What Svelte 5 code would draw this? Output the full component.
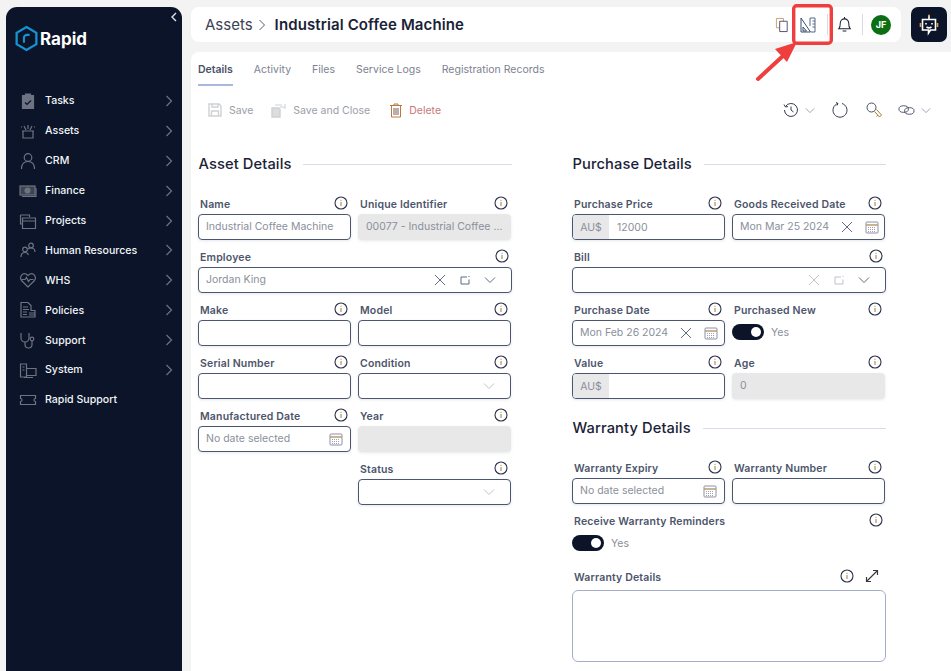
<script>
  const menu = [
    { label: 'Tasks', icon: 'tasks' },
    { label: 'Assets', icon: 'assets' },
    { label: 'CRM', icon: 'crm' },
    { label: 'Finance', icon: 'finance' },
    { label: 'Projects', icon: 'projects' },
    { label: 'Human Resources', icon: 'hr' },
    { label: 'WHS', icon: 'whs' },
    { label: 'Policies', icon: 'policies' },
    { label: 'Support', icon: 'support' },
    { label: 'System', icon: 'system' },
    { label: 'Rapid Support', icon: 'ticket', noArrow: true }
  ];
  const tabs = ['Details', 'Activity', 'Files', 'Service Logs', 'Registration Records'];
</script>

{#snippet info()}
  <svg class="info" viewBox="0 0 14 14" width="14" height="14"><circle cx="7" cy="7" r="6" fill="none" stroke="#2a3248" stroke-width="1.100"/><path d="M7 6v4M7 3.800v1" stroke="#a5793f" stroke-width="1" fill="none"/></svg>
{/snippet}

{#snippet cross(faint)}
  <svg class="ic" class:faint viewBox="0 0 12 12" width="12" height="12"><path d="M1 1l10 10M11 1L1 11" stroke="#5f6b80" stroke-width="1" fill="none"/></svg>
{/snippet}

{#snippet popout(faint)}
  <svg class="ic" class:faint viewBox="0 0 12 12" width="12" height="12"><path d="M8 3H2v7h8V5.500M10 2v1" stroke="#5f6b80" stroke-width="1" fill="none"/></svg>
{/snippet}

{#snippet caret(faint)}
  <svg class="ic" class:faint viewBox="0 0 12 8" width="12" height="8"><path d="M1 1.500l5 5 5-5" stroke="#5f6b80" stroke-width="1" fill="none"/></svg>
{/snippet}

{#snippet calendar()}
  <svg class="ic" viewBox="0 0 14 14" width="14" height="14"><rect x="1" y="2" width="12" height="11" rx="1" fill="none" stroke="#8b8fa6" stroke-width="1"/><path d="M1 5h12" stroke="#b79a78" stroke-width="1.400"/><path d="M3 7.500h8M3 9.500h8M3 11.500h8" stroke="#a3a3ad" stroke-width="1" stroke-dasharray="1 1"/></svg>
{/snippet}

{#snippet label(text)}
  <div class="label"><span>{text}</span>{@render info()}</div>
{/snippet}

<div class="page">
  <aside class="sidebar">
    <svg class="collapse" viewBox="0 0 8 10" width="8" height="10"><path d="M6 1L2 5l4 4" stroke="#dfe3ea" stroke-width="1.400" fill="none"/></svg>
    <div class="logo">
      <svg viewBox="0 0 24 26" width="25" height="27"><path d="M12 2l9.500 5.500v11L12 24l-9.500-5.500v-11z" fill="none" stroke="#1693d2" stroke-width="2.200"/><path d="M9.500 17v-4.500a3 3 0 0 1 3-3H15" fill="none" stroke="#1693d2" stroke-width="2"/></svg>
      <span>Rapid</span>
    </div>
    <nav>
      {#each menu as item}
        <div class="nav-item">
          <svg class="nav-icon" viewBox="0 0 18 18" width="18" height="18" fill="none" stroke="#6d7382" stroke-width="1.200">
            {#if item.icon === 'tasks'}
              <path d="M3.500 3.500h11v13h-11z" fill="#6d7382"/><path d="M6.500 2h5v3h-5z" fill="#6d7382"/><path d="M6 10.500l2 2 4-4" stroke="#0b1428"/>
            {:else if item.icon === 'assets'}
              <path d="M4 9h10v7H4zM3 9h12M7 8L5 4M11 8l2-4M9 7V3M2 5h1M15 5h1" />
            {:else if item.icon === 'crm'}
              <circle cx="9" cy="5.500" r="3.800"/><path d="M2.500 17c0-5 2.500-7.500 6.500-7.500s6.500 2.500 6.500 7.500"/>
            {:else if item.icon === 'finance'}
              <rect x="1" y="4" width="15" height="9" fill="#3d4350"/><circle cx="8.500" cy="8.500" r="2.500" fill="#6d7382"/><path d="M3 14.500h14V6"/>
            {:else if item.icon === 'projects'}
              <path d="M1.500 3h9v2M1.500 3v9h2"/><path d="M3.500 6h13v10.500h-13zM3.500 9h13"/>
            {:else if item.icon === 'hr'}
              <circle cx="12" cy="4.500" r="2.300"/><circle cx="6" cy="8.500" r="2.300"/><path d="M2 16c0-3 1.500-4.500 4-4.500s3 1 3.500 2.500M9 8c1-1 2-1 3-1 2.500 0 4 1.500 4 4"/>
            {:else if item.icon === 'whs'}
              <path d="M9 16L2.500 9.500C0 6 3.500 1.500 7 3l2 1.500L11 3c3.500-1.500 7 3 4.500 6.500z"/><path d="M2.500 8.500H6l1.500-2 2 4 1.500-2h3.500"/>
            {:else if item.icon === 'policies'}
              <path d="M2 1.500h7l3 3v5h4v6.500H2z"/><path d="M4 6h5M4 8.500h6M4 11h4M10 12h6M10 14h6M4 13.500h4"/>
            {:else if item.icon === 'support'}
              <path d="M2 2v5a4 4 0 0 0 8 0V2"/><path d="M6 11v2.500a3.500 3.500 0 0 0 7 0V10"/><circle cx="13" cy="8" r="1.800"/>
            {:else if item.icon === 'system'}
              <path d="M1.500 3h6v13h-6z"/><path d="M7.500 7.500h9.500v7H7.500M5 16.500h9M3.500 6h2M3.500 9h2" />
            {:else}
              <path d="M1.500 4.500h15v3a1.500 1.500 0 0 0 0 3v3h-15v-3a1.500 1.500 0 0 0 0-3z"/>
            {/if}
          </svg>
          <span class="nav-label">{item.label}</span>
          {#if !item.noArrow}
            <svg class="nav-arrow" viewBox="0 0 8 12" width="8" height="12"><path d="M1.500 1l5 5-5 5" stroke="#6d7382" stroke-width="1.200" fill="none"/></svg>
          {/if}
        </div>
      {/each}
    </nav>
  </aside>

  <div class="main">
    <div class="top-row">
      <header class="header">
        <div class="crumbs">
          <span>Assets</span>
          <svg viewBox="0 0 8 12" width="8" height="12"><path d="M1.500 1l5 5-5 5" stroke="#555c6c" stroke-width="1" fill="none"/></svg>
          <strong>Industrial Coffee Machine</strong>
        </div>
        <div class="head-icons">
          <svg viewBox="0 0 16 16" width="15" height="16" fill="none" stroke-width="1"><path d="M9 4V1H1.500v10H5" stroke="#c99a68"/><path d="M5 4h8v11H5z" stroke="#4d4a72"/></svg>
          <svg class="ruler" viewBox="0 0 16 16" width="16" height="16" fill="none" stroke-width="1"><path d="M1 1l9.500 14H1zM3 10l3.500 4H3z" stroke="#3b4c6e"/><path d="M10 1h5v14h-4M10 1v8M12.500 4h2.500M12.500 7h2.500M12.500 10h2.500" stroke="#56688a"/></svg>
          <i class="sep first"></i>
          <svg class="bell" viewBox="0 0 16 18" width="15" height="17" fill="none" stroke="#1a2236" stroke-width="1.100"><path d="M2 13.500c1.500-1.500 1.500-3 1.500-6a4.500 4.500 0 0 1 9 0c0 3 0 4.500 1.500 6z"/><path d="M6 16h4M8 1v2"/></svg>
          <i class="sep"></i>
          <span class="avatar">JF</span>
        </div>
      </header>
      <div class="bot">
        <svg viewBox="0 0 24 24" width="24" height="24" fill="none" stroke="#fff" stroke-width="1.600"><path d="M12 2.500v3.500"/><circle cx="12" cy="2.500" r="1" fill="#e8a24a" stroke="none"/><path d="M5.500 6.500h13v10.500h-5l-2 3v-3h-6z" fill="#0b1428"/><path d="M9 10v1.500M15 10v1.500M9.500 14c1.500 1 3.500 1 5 0"/><path d="M3.500 10v4M20.500 10v4" stroke="#e8a24a"/></svg>
      </div>
    </div>

    <section class="content">
      <div class="tabs">
        {#each tabs as tab, i}
          <span class="tab" class:active={i === 0}>{tab}</span>
        {/each}
      </div>

      <div class="toolbar">
        <div class="actions">
          <button class="action">
            <svg viewBox="0 0 14 14" width="14" height="14" fill="none" stroke="#cfd1d4" stroke-width="1.400"><path d="M1 1h10l2 2v10H1z"/><path d="M4 1v3h6V1M3.500 13V8h7v5"/></svg>
            Save
          </button>
          <button class="action">
            <svg viewBox="0 0 15 15" width="15" height="15" fill="none" stroke="#cfd1d4" stroke-width="1.400"><path d="M1 5h7l1 1v8H1z" fill="#dcdddf"/><path d="M5 3V1M6 2h5M9 4h5M11 1v0M14 1v5" stroke-width="1"/></svg>
            Save and Close
          </button>
          <button class="action danger">
            <svg viewBox="0 0 12 15" width="12" height="15" fill="none" stroke="#b9793f" stroke-width="1"><path d="M0 2.500h12M4 2.500V1h4v1.500M1.500 2.500V14h9V2.500"/><path d="M4 5v7M6 5v7M8 5v7" stroke="#7d5a50"/></svg>
            Delete
          </button>
        </div>
        <div class="tools">
          <svg viewBox="0 0 16 16" width="16" height="16" fill="none" stroke="#333a4c" stroke-width="1"><path d="M2.500 4.500A6.500 6.500 0 1 1 1.500 8M1 2.500l1.500 2.500 2.500-.5M8 4.500V8l2.500 2"/></svg>
          <svg class="tool-caret" viewBox="0 0 12 8" width="10" height="7"><path d="M1 1.500l5 5 5-5" stroke="#8a91a3" stroke-width="1" fill="none"/></svg>
          <svg class="tool-gap" viewBox="0 0 16 16" width="16" height="16" fill="none" stroke="#333a4c" stroke-width="1"><path d="M6 1.500A7 7 0 1 0 10 1.500M6 1.500L4 .5M6 1.500L5 3.500"/></svg>
          <svg class="tool-gap2" viewBox="0 0 16 16" width="16" height="16" fill="none" stroke="#46506a" stroke-width="1"><circle cx="5.500" cy="5.500" r="4.500"/><path d="M8.500 9.500l5 5.500 2-2-5-5.500M12 13l-1.500 1.500" stroke="#a5793f"/></svg>
          <svg class="tool-gap3" viewBox="0 0 18 12" width="17" height="12" fill="none" stroke="#46506a" stroke-width="1"><ellipse cx="6" cy="5" rx="5" ry="3.500"/><ellipse cx="12" cy="7" rx="5" ry="3.500"/></svg>
          <svg class="tool-caret last" viewBox="0 0 12 8" width="10" height="7"><path d="M1 1.500l5 5 5-5" stroke="#8a91a3" stroke-width="1" fill="none"/></svg>
        </div>
      </div>

      <div class="columns">
        <div class="col">
          <h2 class="heading"><span>Asset Details</span></h2>
          <div class="grid">
            <div class="field">{@render label('Name')}<div class="input">Industrial Coffee Machine</div></div>
            <div class="field">{@render label('Unique Identifier')}<div class="input disabled">00077 - Industrial Coffee ...</div></div>
            <div class="field wide">
              {@render label('Employee')}
              <div class="input"><span class="grow">Jordan King</span><span class="lookup">{@render cross()}{@render popout()}{@render caret()}</span></div>
            </div>
            <div class="field">{@render label('Make')}<div class="input"></div></div>
            <div class="field">{@render label('Model')}<div class="input"></div></div>
            <div class="field">{@render label('Serial Number')}<div class="input"></div></div>
            <div class="field">{@render label('Condition')}<div class="input"><span class="grow"></span><span class="lookup">{@render caret(true)}</span></div></div>
            <div class="field">{@render label('Manufactured Date')}<div class="input"><span class="grow">No date selected</span>{@render calendar()}</div></div>
            <div class="field">{@render label('Year')}<div class="input disabled"></div></div>
            <div class="field second">{@render label('Status')}<div class="input"><span class="grow"></span><span class="lookup">{@render caret(true)}</span></div></div>
          </div>
        </div>

        <div class="col">
          <h2 class="heading"><span>Purchase Details</span></h2>
          <div class="grid">
            <div class="field">{@render label('Purchase Price')}<div class="input money"><span class="prefix">AU$</span><span>12000</span></div></div>
            <div class="field">{@render label('Goods Received Date')}<div class="input date"><span class="grow">Mon Mar 25 2024</span>{@render cross()}{@render calendar()}</div></div>
            <div class="field wide">
              {@render label('Bill')}
              <div class="input"><span class="grow"></span><span class="lookup">{@render cross(true)}{@render popout(true)}{@render caret()}</span></div>
            </div>
            <div class="field">{@render label('Purchase Date')}<div class="input date"><span class="grow">Mon Feb 26 2024</span>{@render cross()}{@render calendar()}</div></div>
            <div class="field">{@render label('Purchased New')}<div class="toggle-row"><span class="toggle"></span>Yes</div></div>
            <div class="field">{@render label('Value')}<div class="input money"><span class="prefix">AU$</span></div></div>
            <div class="field">{@render label('Age')}<div class="input disabled">0</div></div>
          </div>

          <h2 class="heading warranty"><span>Warranty Details</span></h2>
          <div class="grid">
            <div class="field">{@render label('Warranty Expiry')}<div class="input"><span class="grow">No date selected</span>{@render calendar()}</div></div>
            <div class="field">{@render label('Warranty Number')}<div class="input"></div></div>
            <div class="field wide">{@render label('Receive Warranty Reminders')}<div class="toggle-row"><span class="toggle"></span>Yes</div></div>
            <div class="field wide notes">
              <div class="label">
                <span>Warranty Details</span>
                {@render info()}
                <svg class="expand" viewBox="0 0 14 14" width="14" height="14" fill="none" stroke="#3a3a3a" stroke-width="1.200"><path d="M1.500 12.500l11-11M8 1.500h4.500V6M1.500 8v4.500H6"/></svg>
              </div>
              <div class="textarea"></div>
            </div>
          </div>
        </div>
      </div>
    </section>
  </div>

  <!-- annotation drawn over the screenshot -->
  <svg class="callout" viewBox="0 0 951 100" width="951" height="100">
    <rect x="793.700" y="5.700" width="37.600" height="37.600" rx="3" fill="none" stroke="#ee3e3e" stroke-width="3.400"/>
    <path d="M758 79l26-24" stroke="#ee3e3e" stroke-width="4" stroke-linecap="round" fill="none"/>
    <path d="M797 42l-22 7 12 13z" fill="#ee3e3e"/>
  </svg>
</div>

<style>
  :global(body) {
    background: #f3f3f3;
    overflow: hidden;
  }
  .page {
    position: relative;
    display: flex;
    gap: 9px;
    height: 664px;
    padding: 7px 0 0 6px;
    overflow: hidden;
    font-family: Inter, "Liberation Sans", sans-serif;
    font-size: 11px;
    color: #1a2236;
  }

  /* --- Sidebar --- */
  .sidebar {
    position: relative;
    flex: 0 0 176px;
    background: #0b1428;
    border-radius: 11px 11px 0 0;
  }
  .collapse {
    position: absolute;
    top: 5px;
    right: 4px;
  }
  .logo {
    display: flex;
    align-items: center;
    gap: 1px;
    padding: 18px 0 0 8px;
    color: #fff;
    font-size: 17px;
    font-weight: 700;
  }
  nav {
    margin-top: 34px;
  }
  .nav-item {
    display: flex;
    align-items: center;
    height: 29.900px;
    padding: 0 9px 0 13px;
    color: #f2f4f8;
    font-size: 10.600px;
    font-weight: 500;
  }
  .nav-icon {
    flex: none;
  }
  .nav-label {
    flex: 1;
    margin-left: 8px;
  }

  /* --- Top bar --- */
  .main {
    flex: 1;
    min-width: 0;
  }
  .top-row {
    display: flex;
    gap: 10px;
    padding-right: 4px;
  }
  .header {
    flex: 1;
    display: flex;
    align-items: center;
    justify-content: space-between;
    height: 35px;
    padding: 0 10px 0 14px;
    background: #fff;
    border-radius: 8px;
  }
  .crumbs {
    display: flex;
    align-items: center;
    gap: 8px;
    font-size: 15px;
    color: #3b4254;
  }
  .crumbs svg {
    margin-left: -3px;
  }
  .crumbs strong {
    margin-left: 1px;
    letter-spacing: 0.120px;
    font-weight: 600;
    color: #1a2236;
  }
  .head-icons {
    display: flex;
    align-items: center;
  }
  .ruler {
    margin-left: 10px;
  }
  .sep {
    width: 1px;
    height: 21px;
    margin: 0 8px 0 10px;
    background: #d9dbe0;
  }
  .sep.first {
    margin: 0 9px 0 11px;
  }
  .avatar {
    display: grid;
    place-items: center;
    width: 20px;
    height: 20px;
    border-radius: 50%;
    background: #0b6e12;
    color: #fff;
    font-size: 9px;
    font-weight: 700;
  }
  .bot {
    display: grid;
    place-items: center;
    flex: 0 0 36px;
    height: 35px;
    background: #0b1428;
    border-radius: 7px;
  }

  /* --- Content card --- */
  .content {
    margin-top: 10px;
    height: 619px;
    padding: 0 0 0 7px;
    background: #fff;
    border-radius: 8px 0 0 0;
  }
  .tabs {
    display: flex;
    gap: 21px;
    height: 35px;
  }
  .tab {
    height: 34px;
    padding-top: 11px;
    box-sizing: border-box;
    font-size: 10.500px;
    color: #7c8291;
  }
  .tab.active {
    color: #4a5266;
    font-weight: 600;
    border-bottom: 2px solid #a9b8dd;
  }
  .toolbar {
    display: flex;
    align-items: center;
    justify-content: space-between;
    height: 46px;
    padding: 0 18px 0 10px;
  }
  .actions {
    display: flex;
    gap: 18px;
  }
  .action {
    display: flex;
    align-items: center;
    gap: 7px;
    padding: 0;
    border: 0;
    background: none;
    font: inherit;
    font-size: 10.500px;
    color: #9a9ea8;
  }
  .action.danger {
    margin-left: 2px;
    color: #c9777a;
  }
  .tools {
    display: flex;
    align-items: center;
  }
  .tools > svg:first-child {
    margin-right: -2px;
  }
  .tool-caret {
    margin-left: 8px;
  }
  .tool-caret.last {
    margin: 0 2px 0 6px;
  }
  .tool-gap {
    margin-left: 17px;
  }
  .tool-gap2 {
    margin-left: 18px;
  }
  .tool-gap3 {
    margin-left: 16px;
  }

  /* --- Form --- */
  .columns {
    display: flex;
    gap: 60px;
    margin-top: 16px;
  }
  .col {
    width: 314px;
  }
  .heading {
    display: flex;
    align-items: center;
    gap: 12px;
    height: 30px;
    margin: 0 0 15px;
    padding-left: 0.500px;
    font-size: 14.700px;
    font-weight: 500;
    letter-spacing: 0.100px;
    color: #1a2236;
  }
  .heading::after {
    content: '';
    flex: 1;
    height: 1px;
    background: #d8dde8;
  }
  .heading.warranty {
    margin-top: 7px;
  }
  .grid {
    display: grid;
    grid-template-columns: 153px 153px;
    column-gap: 7px;
  }
  .field {
    height: 53px;
    min-width: 0;
  }
  .wide {
    grid-column: 1 / 3;
    margin-right: -1px;
  }
  .second {
    grid-column: 2;
  }
  .label {
    display: flex;
    align-items: center;
    gap: 8px;
    height: 20px;
    padding: 0 3px 0 2px;
    font-size: 10.500px;
    font-weight: 600;
    letter-spacing: 0.170px;
    color: #4d556b;
  }
  .label > span {
    flex: 1;
  }
  .info {
    flex: none;
    margin-top: -3px;
  }
  .input {
    display: flex;
    align-items: center;
    gap: 8px;
    box-sizing: border-box;
    height: 26px;
    padding: 0 7px 1px;
    border: 1px solid #4d5670;
    border-radius: 4px;
    box-shadow: 0 1px 3px rgba(60, 70, 100, 0.12);
    font-size: 10.500px;
    color: #8b8f9b;
    white-space: nowrap;
    overflow: hidden;
  }
  .input.date {
    gap: 12px;
  }
  .input.disabled {
    border-color: #e8e8e8;
    background: #e8e8e8;
  }
  .grow {
    flex: 1;
  }
  .lookup {
    display: flex;
    align-items: center;
    gap: 13px;
    padding-right: 8px;
  }
  .ic {
    flex: none;
  }
  .ic.faint {
    opacity: 0.4;
  }
  .input.money {
    padding: 0 7px 0 0;
  }
  .prefix {
    display: grid;
    place-items: center;
    width: 36px;
    height: 100%;
    background: #e8e8e8;
  }
  .toggle-row {
    display: flex;
    align-items: center;
    gap: 7px;
    height: 24px;
    font-size: 10.500px;
    color: #8b8f9b;
  }
  .toggle {
    position: relative;
    width: 32px;
    height: 16px;
    border-radius: 8px;
    background: #0b1428;
  }
  .toggle::after {
    content: '';
    position: absolute;
    top: 3px;
    right: 3px;
    width: 10px;
    height: 10px;
    border-radius: 50%;
    background: #fff;
  }
  .notes {
    height: auto;
    margin-top: 3px;
  }
  .notes .label {
    padding-right: 7px;
  }
  .expand {
    margin: -3px 0 0 3px;
  }
  .textarea {
    height: 72px;
    margin-top: 3px;
    box-sizing: border-box;
    border: 1px solid #a3adc6;
    border-radius: 6px;
  }

  .callout {
    position: absolute;
    top: 0;
    left: 0;
    pointer-events: none;
  }
</style>
